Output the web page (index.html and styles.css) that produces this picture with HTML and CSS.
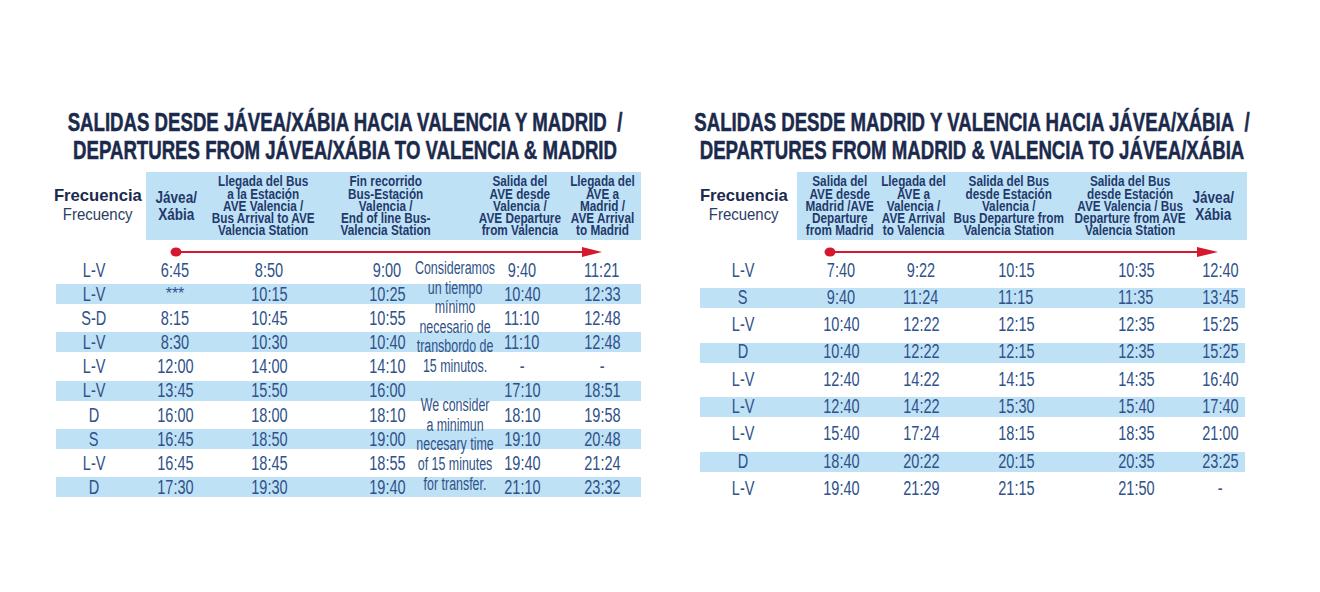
FILE: index.html
```html
<!DOCTYPE html>
<html lang="es">
<head>
<meta charset="utf-8">
<title>Horarios Jávea/Xábia</title>
<link rel="stylesheet" href="styles.css">
</head>
<body>
<div class="page">
  <section class="panel panel-l">
    <h1 class="title"><span>SALIDAS DESDE JÁVEA/XÁBIA HACIA VALENCIA Y MADRID&nbsp; /</span><span>DEPARTURES FROM JÁVEA/XÁBIA TO VALENCIA &amp; MADRID</span></h1>
    <div class="head">
      <div class="freq freq-l"><b>Frecuencia</b><span>Frecuency</span></div>
      <div class="band band-l">
        <div class="hc big">Jávea/<br>Xábia</div>
        <div class="hc">Llegada del Bus<br>a la Estación<br>AVE Valencia /<br>Bus Arrival to AVE<br>Valencia Station</div>
        <div class="hc">Fin recorrido<br>Bus-Estación<br>Valencia /<br>End of line Bus-<br>Valencia Station</div>
        <div class="hc">Salida del<br>AVE desde<br>Valencia /<br>AVE Departure<br>from Valencia</div>
        <div class="hc">Llegada del<br>AVE a<br>Madrid /<br>AVE Arrival<br>to Madrid</div>
      </div>
    </div>
    <div class="arrow arrow-l">
      <svg width="588" height="18" viewBox="0 0 588 18">
        <line x1="123" y1="12" x2="532" y2="12" stroke="#d5182e" stroke-width="2"/>
        <ellipse cx="123" cy="12" rx="5.5" ry="4.6" fill="#d5182e"/>
        <polygon points="529,7 549,12 529,17" fill="#d5182e"/>
      </svg>
    </div>
    <div class="grid grid-l">
      <div>L-V</div><div>6:45</div><div>8:50</div><div>9:00</div><div>9:40</div><div>11:21</div>
      <div>L-V</div><div class="ast">***</div><div>10:15</div><div>10:25</div><div>10:40</div><div>12:33</div>
      <div>S-D</div><div>8:15</div><div>10:45</div><div>10:55</div><div>11:10</div><div>12:48</div>
      <div>L-V</div><div>8:30</div><div>10:30</div><div>10:40</div><div>11:10</div><div>12:48</div>
      <div>L-V</div><div>12:00</div><div>14:00</div><div>14:10</div><div>-</div><div>-</div>
      <div>L-V</div><div>13:45</div><div>15:50</div><div>16:00</div><div>17:10</div><div>18:51</div>
      <div>D</div><div>16:00</div><div>18:00</div><div>18:10</div><div>18:10</div><div>19:58</div>
      <div>S</div><div>16:45</div><div>18:50</div><div>19:00</div><div>19:10</div><div>20:48</div>
      <div>L-V</div><div>16:45</div><div>18:45</div><div>18:55</div><div>19:40</div><div>21:24</div>
      <div>D</div><div>17:30</div><div>19:30</div><div>19:40</div><div>21:10</div><div>23:32</div>
      <div class="note">
        <p>Consideramos<br>un tiempo<br>mínimo<br>necesario de<br>transbordo de<br>15 minutos.</p>
        <p>We consider<br>a minimun<br>necesary time<br>of 15 minutes<br>for transfer.</p>
      </div>
    </div>
  </section>

  <section class="panel panel-r">
    <h1 class="title"><span>SALIDAS DESDE MADRID Y VALENCIA HACIA JÁVEA/XÁBIA&nbsp; /</span><span>DEPARTURES FROM MADRID &amp; VALENCIA TO JÁVEA/XÁBIA</span></h1>
    <div class="head">
      <div class="freq freq-r"><b>Frecuencia</b><span>Frecuency</span></div>
      <div class="band band-r">
        <div class="hc">Salida del<br>AVE desde<br>Madrid /AVE<br>Departure<br>from Madrid</div>
        <div class="hc">Llegada del<br>AVE a<br>Valencia /<br>AVE Arrival<br>to Valencia</div>
        <div class="hc">Salida del Bus<br>desde Estación<br>Valencia /<br>Bus Departure from<br>Valencia Station</div>
        <div class="hc">Salida del Bus<br>desde Estación<br>AVE Valencia / Bus<br>Departure from AVE<br>Valencia Station</div>
        <div class="hc big">Jávea/<br>Xábia</div>
      </div>
    </div>
    <div class="arrow arrow-r">
      <svg width="550" height="17" viewBox="0 0 550 17">
        <line x1="133" y1="12" x2="503" y2="12" stroke="#d5182e" stroke-width="2"/>
        <ellipse cx="133" cy="12" rx="5.5" ry="4.6" fill="#d5182e"/>
        <polygon points="500,7 521,12 500,17" fill="#d5182e"/>
      </svg>
    </div>
    <div class="grid grid-r">
      <div>L-V</div><div>7:40</div><div>9:22</div><div>10:15</div><div>10:35</div><div>12:40</div>
      <div>S</div><div>9:40</div><div>11:24</div><div>11:15</div><div>11:35</div><div>13:45</div>
      <div>L-V</div><div>10:40</div><div>12:22</div><div>12:15</div><div>12:35</div><div>15:25</div>
      <div>D</div><div>10:40</div><div>12:22</div><div>12:15</div><div>12:35</div><div>15:25</div>
      <div>L-V</div><div>12:40</div><div>14:22</div><div>14:15</div><div>14:35</div><div>16:40</div>
      <div>L-V</div><div>12:40</div><div>14:22</div><div>15:30</div><div>15:40</div><div>17:40</div>
      <div>L-V</div><div>15:40</div><div>17:24</div><div>18:15</div><div>18:35</div><div>21:00</div>
      <div>D</div><div>18:40</div><div>20:22</div><div>20:15</div><div>20:35</div><div>23:25</div>
      <div>L-V</div><div>19:40</div><div>21:29</div><div>21:15</div><div>21:50</div><div>-</div>
    </div>
  </section>
</div>
</body>
</html>
```

FILE: styles.css
```css
html, body {
  margin: 0;
  padding: 0;
  background: #ffffff;
}

body {
  font-family: "Liberation Sans", Arial, Helvetica, sans-serif;
  color: #2f5289;
}

.page {
  display: flex;
  align-items: flex-start;
  gap: 56px;
  padding: 108px 0 0 53px;
}

.panel-l { width: 588px; }
.panel-r { width: 550px; }

/* Titles: condensed heavy sans, emulated by horizontal scaling */
.title {
  margin: 0;
  display: flex;
  flex-direction: column;
  align-items: center;
  font-size: 25px;
  line-height: 28px;
  font-weight: 700;
  color: #1b2a4c;
  white-space: nowrap;
  -webkit-text-stroke: 0.5px #1b2a4c;
  transform: scaleX(0.745);
}
.panel-l .title { margin-right: 4px; }

.head {
  display: flex;
  margin-top: 8px;
  height: 68px;
}

.freq {
  display: flex;
  flex-direction: column;
  align-items: center;
  padding-top: 14px;
  line-height: 19px;
  color: #1c2a4f;
  white-space: nowrap;
  box-sizing: border-box;
}
.freq b {
  font-weight: 700;
  font-size: 17px;
  transform: scaleX(0.98);
}
.freq span {
  font-size: 17px;
  color: #2a3d63;
  transform: scaleX(0.88);
}

.freq-l { width: 93px; padding-right: 3px; }
.freq-r { width: 100px; padding-right: 6px; }

.band {
  display: grid;
  align-items: center;
  background: #bfe1f6;
  height: 68px;
}
.band-l {
  width: 495px;
  grid-template-columns: 5px 50px 3.5px 118px 11.5px 104px 36px 92px 1px 72px 2px;
}
.band-r {
  width: 450px;
  grid-template-columns: 6px 74px 1px 72px 2px 114px 9px 110px 1px 54px 7px;
}
.band > :nth-child(1) { grid-column: 2; }
.band > :nth-child(2) { grid-column: 4; }
.band > :nth-child(3) { grid-column: 6; }
.band > :nth-child(4) { grid-column: 8; }
.band > :nth-child(5) { grid-column: 10; }

.hc {
  grid-row: 1;
  justify-self: center;
  text-align: center;
  white-space: nowrap;
  font-weight: 700;
  font-size: 14px;
  line-height: 12.2px;
  color: #1f3a6b;
  transform: scaleX(0.84);
}
.hc.big {
  font-size: 16.5px;
  line-height: 17px;
  transform: scaleX(0.82);
}

.arrow svg { display: block; }
.arrow-l { height: 18px; }
.arrow-r { height: 16.5px; }

.grid {
  display: grid;
  margin-left: 3px;
  font-size: 19.5px;
  text-align: center;
  white-space: nowrap;
}
.grid > div {
  justify-self: center;
  transform: scaleX(0.745);
}

.grid-l {
  width: 585px;
  grid-template-columns: 8px 60px 21px 60px 34px 60px 62px 52px 84px 50px 25px 60px 9px;
  grid-auto-rows: 24.1px;
  line-height: 24.1px;
  background: repeating-linear-gradient(to bottom,
    transparent 0, transparent 26.15px,
    #bfe1f6 26.15px, #bfe1f6 46.15px,
    transparent 46.15px, transparent 48.2px);
}
.grid-l > div:nth-child(6n+1) { grid-column: 2; }
.grid-l > div:nth-child(6n+2) { grid-column: 4; }
.grid-l > div:nth-child(6n+3) { grid-column: 6; }
.grid-l > div:nth-child(6n+4) { grid-column: 8; }
.grid-l > div:nth-child(6n+5) { grid-column: 10; }
.grid-l > div:nth-child(6n) { grid-column: 12; }

.grid-l > div.note {
  grid-column: 9;
  grid-row: 1 / span 10;
  align-self: start;
  padding-top: 1px;
  font-size: 18px;
  line-height: 19.6px;
  transform: scaleX(0.69);
}
.note p { margin: 0; }
.note p + p { margin-top: 19.6px; }

.grid > div.ast {
  font-size: 16px;
  transform: none;
}

.grid-r {
  width: 545px;
  grid-template-columns: 13px 60px 38px 60px 20px 60px 35px 60px 60px 60px 29px 50px;
  grid-auto-rows: 27.3px;
  line-height: 27.3px;
  background: repeating-linear-gradient(to bottom,
    transparent 0, transparent 30.95px,
    #bfe1f6 30.95px, #bfe1f6 50.95px,
    transparent 50.95px, transparent 54.6px);
}
.grid-r > div:nth-child(6n+1) { grid-column: 2; }
.grid-r > div:nth-child(6n+2) { grid-column: 4; }
.grid-r > div:nth-child(6n+3) { grid-column: 6; }
.grid-r > div:nth-child(6n+4) { grid-column: 8; }
.grid-r > div:nth-child(6n+5) { grid-column: 10; }
.grid-r > div:nth-child(6n) { grid-column: 12; }
```
